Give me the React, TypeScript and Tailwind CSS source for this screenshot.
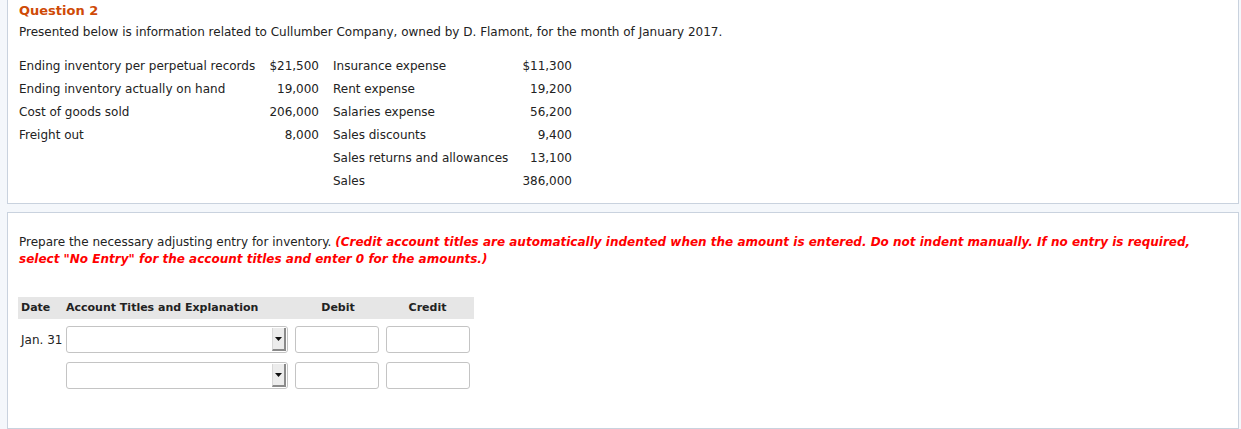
import React from 'react';

const font = { fontFamily: '"DejaVu Sans", Verdana, sans-serif' };

const leftRows = [
  ['Ending inventory per perpetual records', '$21,500'],
  ['Ending inventory actually on hand', '19,000'],
  ['Cost of goods sold', '206,000'],
  ['Freight out', '8,000'],
  ['', ''],
  ['', ''],
];

const rightRows = [
  ['Insurance expense', '$11,300'],
  ['Rent expense', '19,200'],
  ['Salaries expense', '56,200'],
  ['Sales discounts', '9,400'],
  ['Sales returns and allowances', '13,100'],
  ['Sales', '386,000'],
];

const SelectBox: React.FC = () => (
  <div className="relative w-[222px] h-[27px] rounded-[3px] border border-[#c4c4c4] bg-white">
    <div className="absolute right-[1px] top-[1px] bottom-[1px] w-[14px] bg-[#ececec] border-r-2 border-b-2 border-[#8a8a8a] border-l border-l-[#d8d8d8] flex items-center justify-center">
      <svg width="7" height="4" viewBox="0 0 7 4">
        <path d="M0 0 L7 0 L3.5 4 Z" fill="#111" />
      </svg>
    </div>
  </div>
);

const InputBox: React.FC = () => (
  <div className="w-[84px] h-[27px] rounded-[3px] border border-[#c4c4c4] bg-white" />
);

const App: React.FC = () => {
  return (
    <div className="min-h-screen bg-[#f4f7fb] pl-[7px] pr-[2px] text-[#222] text-[12px]" style={font}>
      {/* Question panel */}
      <div className="bg-white border-l border-r border-b border-[#c9d2de] pl-[11px] h-[204px]">
        <div className="pt-[2px] text-[13px] font-bold text-[#cf4a06] leading-[17px]">Question 2</div>
        <div className="mt-[5px] leading-[17px]">
          Presented below is information related to Cullumber Company, owned by D. Flamont, for the month of January 2017.
        </div>
        <div className="mt-[13px] flex">
          <div>
            {leftRows.map((r, i) => (
              <div key={i} className="flex h-[23px] items-center">
                <div className="w-[247px]">{r[0]}</div>
                <div className="w-[53px] text-right">{r[1]}</div>
              </div>
            ))}
          </div>
          <div className="ml-[14px]">
            {rightRows.map((r, i) => (
              <div key={i} className="flex h-[23px] items-center">
                <div className="w-[186px]">{r[0]}</div>
                <div className="w-[53px] text-right">{r[1]}</div>
              </div>
            ))}
          </div>
        </div>
      </div>

      {/* Answer panel */}
      <div className="mt-[8px] bg-white border border-[#c9d2de] pl-[11px] h-[217px]">
        <div className="pt-[21px] leading-[17px]">
          Prepare the necessary adjusting entry for inventory.{' '}
          <span className="font-bold italic text-[#ff0000]">
            (Credit account titles are automatically indented when the amount is entered. Do not indent manually. If no entry is required,
            <br />
            select "No Entry" for the account titles and enter 0 for the amounts.)
          </span>
        </div>

        <div className="mt-[29px] w-[456px] -ml-px">
          <div className="flex h-[22px] items-center bg-[#e6e6e6] font-bold text-[11px] pl-[3px]">
            <div className="w-[45px]">Date</div>
            <div className="w-[229px]">Account Titles and Explanation</div>
            <div className="w-[86px] text-center">Debit</div>
            <div className="w-[93px] text-center">Credit</div>
          </div>
          <div className="flex items-center mt-[7px] h-[27px] pl-px">
            <div className="w-[47px] pl-[2px]">Jan. 31</div>
            <SelectBox />
            <div className="ml-[7px]"><InputBox /></div>
            <div className="ml-[7px]"><InputBox /></div>
          </div>
          <div className="flex items-center mt-[9px] h-[27px] pl-px">
            <div className="w-[47px]" />
            <SelectBox />
            <div className="ml-[7px]"><InputBox /></div>
            <div className="ml-[7px]"><InputBox /></div>
          </div>
        </div>
      </div>
    </div>
  );
};

export default App;
